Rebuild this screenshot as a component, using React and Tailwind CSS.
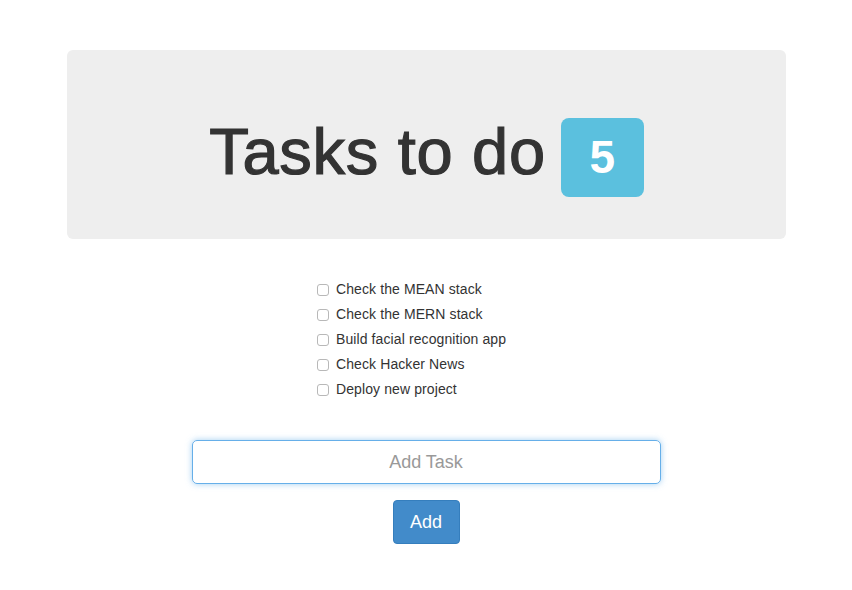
import { useState } from "react";

const TASKS = [
  "Check the MEAN stack",
  "Check the MERN stack",
  "Build facial recognition app",
  "Check Hacker News",
  "Deploy new project",
];

export default function App() {
  const [done, setDone] = useState({});
  const [text, setText] = useState("");

  return (
    <div className="min-h-screen bg-white text-[#333] font-['Liberation_Sans',Arial,sans-serif] pt-[50px]">
      {/* Jumbotron */}
      <div className="mx-[67px] w-[719px] h-[189px] rounded-[6px] bg-[#eeeeee] pt-[66px] flex justify-center items-start">
        <h1 className="text-[65px] leading-[71.5px] font-normal text-[#333] tracking-[0.7px] [-webkit-text-stroke:1.2px_#333]">Tasks to do</h1>
        <span className="ml-[15px] mt-[2px] w-[83px] h-[79px] rounded-[8px] bg-[#5bc0de] text-white font-bold text-[46px] flex items-center justify-center">
          5
        </span>
      </div>

      {/* Task list */}
      <ul className="mt-[38px] ml-[317px] flex flex-col">
        {TASKS.map((t, i) => (
          <li key={t} className="h-[25px] flex items-center text-[14px] tracking-[0.1px]">
            <input
              type="checkbox"
              checked={!!done[i]}
              onChange={() => setDone((d) => ({ ...d, [i]: !d[i] }))}
              className="appearance-none w-[12px] h-[12px] rounded-[3px] border border-[#b8b8b8] bg-white mr-[7px]"
            />
            <span>{t}</span>
          </li>
        ))}
      </ul>

      {/* Add form */}
      <div className="mt-[38px] flex flex-col items-center">
        <input
          autoFocus
          value={text}
          onChange={(e) => setText(e.target.value)}
          placeholder="Add Task"
          className="w-[469px] h-[44px] rounded-[5px] border border-[#66afe9] shadow-[0_0_6px_rgba(102,175,233,0.6)] text-center text-[18px] text-[#555] placeholder-[#999] outline-none"
        />
        <button className="mt-[16px] w-[67px] h-[44px] rounded-[4px] bg-[#428bca] border border-[#357ebd] text-white text-[18px]">
          Add
        </button>
      </div>
    </div>
  );
}
